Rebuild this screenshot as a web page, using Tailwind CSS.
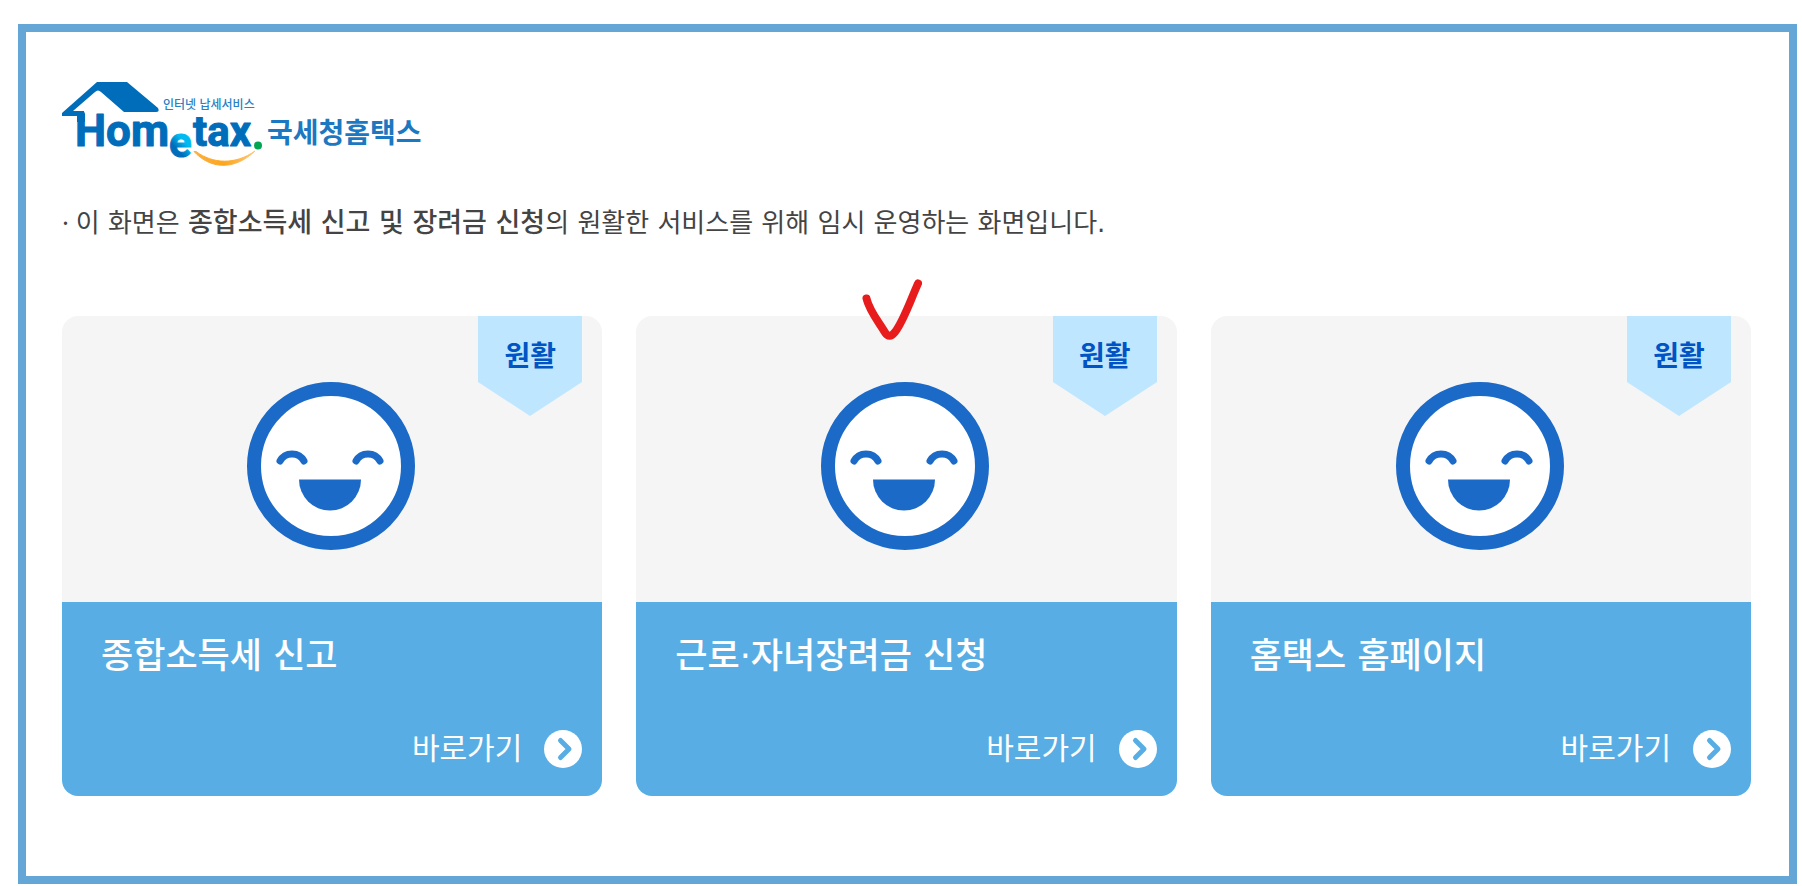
<!DOCTYPE html>
<html lang="ko">
<head>
    <meta charset="UTF-8">
    <meta name="viewport" content="width=device-width, initial-scale=1.0">
    <title>국세청 홈택스</title>
    <script src="https://cdn.jsdelivr.net/npm/@tailwindcss/browser@4"></script>
</head>
<body class="bg-white font-['DejaVu_Sans','Noto_Sans_CJK_KR',sans-serif] text-[#444444]">
    <!-- Shared icons -->
    <svg class="hidden" aria-hidden="true">
        <symbol id="smile" viewBox="0 0 168 168">
            <circle cx="84" cy="84" r="77" fill="#fff" stroke="#1c6ac8" stroke-width="14"/>
            <path d="M33 79C38 69.500 52 69.500 57 79M109 79C114 69.500 128 69.500 133 79" fill="none" stroke="#1c6ac8" stroke-width="7" stroke-linecap="round"/>
            <path d="M52 97.500H114A31 31 0 0 1 52 97.500Z" fill="#1c6ac8"/>
        </symbol>
        <symbol id="arrow" viewBox="0 0 38 38">
            <circle cx="19" cy="19" r="19" fill="#fff"/>
            <path d="M16.500 10.500L25 19L16.500 27.500" fill="none" stroke="#58aee4" stroke-width="5" stroke-linecap="round" stroke-linejoin="round"/>
        </symbol>
        <symbol id="ribbon" viewBox="0 0 104 100">
            <path d="M0 0H104V66L52 100L0 66Z" fill="#bfe6ff"/>
        </symbol>
    </svg>

    <main class="mt-6 mb-0.5 ml-[18px] mr-[5px] border-8 border-[#64a7d6] pt-[50px] pb-20 pl-9 pr-[38px]">
        <!-- Logo -->
        <h1>
            <svg class="block w-[362px] h-[86px]" viewBox="0 0 362 86" role="img" aria-label="Hometax 국세청홈택스">
                <defs>
                    <linearGradient id="e-fill" x1="0.2" y1="1" x2="0.7" y2="0">
                        <stop offset="0.35" stop-color="#006dbb"/>
                        <stop offset="0.6" stop-color="#00b9f0"/>
                    </linearGradient>
                    <linearGradient id="smile-fill" x1="0" x2="1">
                        <stop offset="0" stop-color="#fcb040"/>
                        <stop offset="0.5" stop-color="#fca61e"/>
                        <stop offset="1" stop-color="#fdc878"/>
                    </linearGradient>
                </defs>
                <path d="M35 0H65L96 26Q98 30 94 30H62L39 10Q36 7 33 10L11 29H22V34H0V31Z" fill="#006dbb"/>
                <path d="M15 29H20Q23 29 23 33V40H15Z" fill="#006dbb"/>
                <g font-family="Roboto" font-weight="700" fill="#006dbb" stroke="#006dbb" stroke-width="1" stroke-linejoin="round">
                    <text x="13" y="64" font-size="44">Hom</text>
                    <text x="131" y="64" font-size="42">tax</text>
                    <text x="107" y="75" font-size="42" fill="url(#e-fill)" stroke="url(#e-fill)">e</text>
                </g>
                <circle cx="196" cy="63.500" r="4" fill="#00a651"/>
                <path d="M132 69.500C148 87 172 89 193 69C173 83 151 82 134 69.500Z" fill="url(#smile-fill)" stroke="url(#smile-fill)" stroke-linejoin="round"/>
                <text x="101" y="27" font-family="'Noto Sans CJK KR'" font-weight="500" font-size="12" fill="#2a80c5">인터넷 납세서비스</text>
                <text x="205" y="61" font-family="'Noto Sans CJK KR'" font-weight="700" font-size="28" fill="#1c78c0">국세청홈택스</text>
            </svg>
        </h1>

        <p class="mt-9 text-[26px] leading-9"><span class="font-['Noto_Sans']">· </span>이 화면은 <strong class="text-[27px] font-medium">종합소득세 신고 및 장려금 신청</strong>의 원활한 서비스를 위해 임시 운영하는 화면입니다.</p>

        <!-- Service cards -->
        <ul class="mt-[75px] grid grid-cols-3 gap-[34px]">
            <li>
                <a href="#" class="block">
                    <div class="relative flex h-[286px] justify-center rounded-t-2xl bg-[#f5f5f5] pt-[66px] pr-0.5">
                        <svg class="size-[168px]"><use href="#smile"/></svg>
                        <div class="absolute top-0 right-5 h-[100px] w-[104px]">
                            <svg class="absolute inset-0 size-full"><use href="#ribbon"/></svg>
                            <span class="relative block pt-[21px] text-center text-[28px] leading-10 font-bold text-[#0054c4]">원활</span>
                        </div>
                    </div>
                    <div class="rounded-b-2xl bg-[#58aee4] pt-[30px] pr-5 pb-7 pl-[39px] text-white">
                        <h2 class="text-[35px] leading-[48px] font-medium">종합소득세 신고</h2>
                        <div class="mt-[50px] flex items-center justify-end gap-[22px]">
                            <span class="text-[30px] leading-[38px]">바로가기</span>
                            <svg class="size-[38px]"><use href="#arrow"/></svg>
                        </div>
                    </div>
                </a>
            </li>
            <li class="relative">
                <a href="#" class="block">
                    <div class="relative flex h-[286px] justify-center rounded-t-2xl bg-[#f5f5f5] pt-[66px] pr-0.5">
                        <svg class="size-[168px]"><use href="#smile"/></svg>
                        <div class="absolute top-0 right-5 h-[100px] w-[104px]">
                            <svg class="absolute inset-0 size-full"><use href="#ribbon"/></svg>
                            <span class="relative block pt-[21px] text-center text-[28px] leading-10 font-bold text-[#0054c4]">원활</span>
                        </div>
                    </div>
                    <div class="rounded-b-2xl bg-[#58aee4] pt-[30px] pr-5 pb-7 pl-[39px] text-white">
                        <h2 class="text-[35px] leading-[48px] font-medium">근로·자녀장려금 신청</h2>
                        <div class="mt-[50px] flex items-center justify-end gap-[22px]">
                            <span class="text-[30px] leading-[38px]">바로가기</span>
                            <svg class="size-[38px]"><use href="#arrow"/></svg>
                        </div>
                    </div>
                </a>
                <!-- Hand-drawn check mark -->
                <svg class="absolute -top-[37px] left-[226px] h-[64px] w-[60px]" viewBox="0 0 60 64" fill="none" stroke="#e81c1c" stroke-width="8" stroke-linecap="round" stroke-linejoin="round">
                    <path d="M4.500 19.500C7 31 16 42 23 53.500C26 58 29 58 33 53C41 43 47 25 56 4.500"/>
                </svg>
            </li>
            <li>
                <a href="#" class="block">
                    <div class="relative flex h-[286px] justify-center rounded-t-2xl bg-[#f5f5f5] pt-[66px] pr-0.5">
                        <svg class="size-[168px]"><use href="#smile"/></svg>
                        <div class="absolute top-0 right-5 h-[100px] w-[104px]">
                            <svg class="absolute inset-0 size-full"><use href="#ribbon"/></svg>
                            <span class="relative block pt-[21px] text-center text-[28px] leading-10 font-bold text-[#0054c4]">원활</span>
                        </div>
                    </div>
                    <div class="rounded-b-2xl bg-[#58aee4] pt-[30px] pr-5 pb-7 pl-[39px] text-white">
                        <h2 class="text-[35px] leading-[48px] font-medium">홈택스 홈페이지</h2>
                        <div class="mt-[50px] flex items-center justify-end gap-[22px]">
                            <span class="text-[30px] leading-[38px]">바로가기</span>
                            <svg class="size-[38px]"><use href="#arrow"/></svg>
                        </div>
                    </div>
                </a>
            </li>
        </ul>
    </main>
</body>
</html>
